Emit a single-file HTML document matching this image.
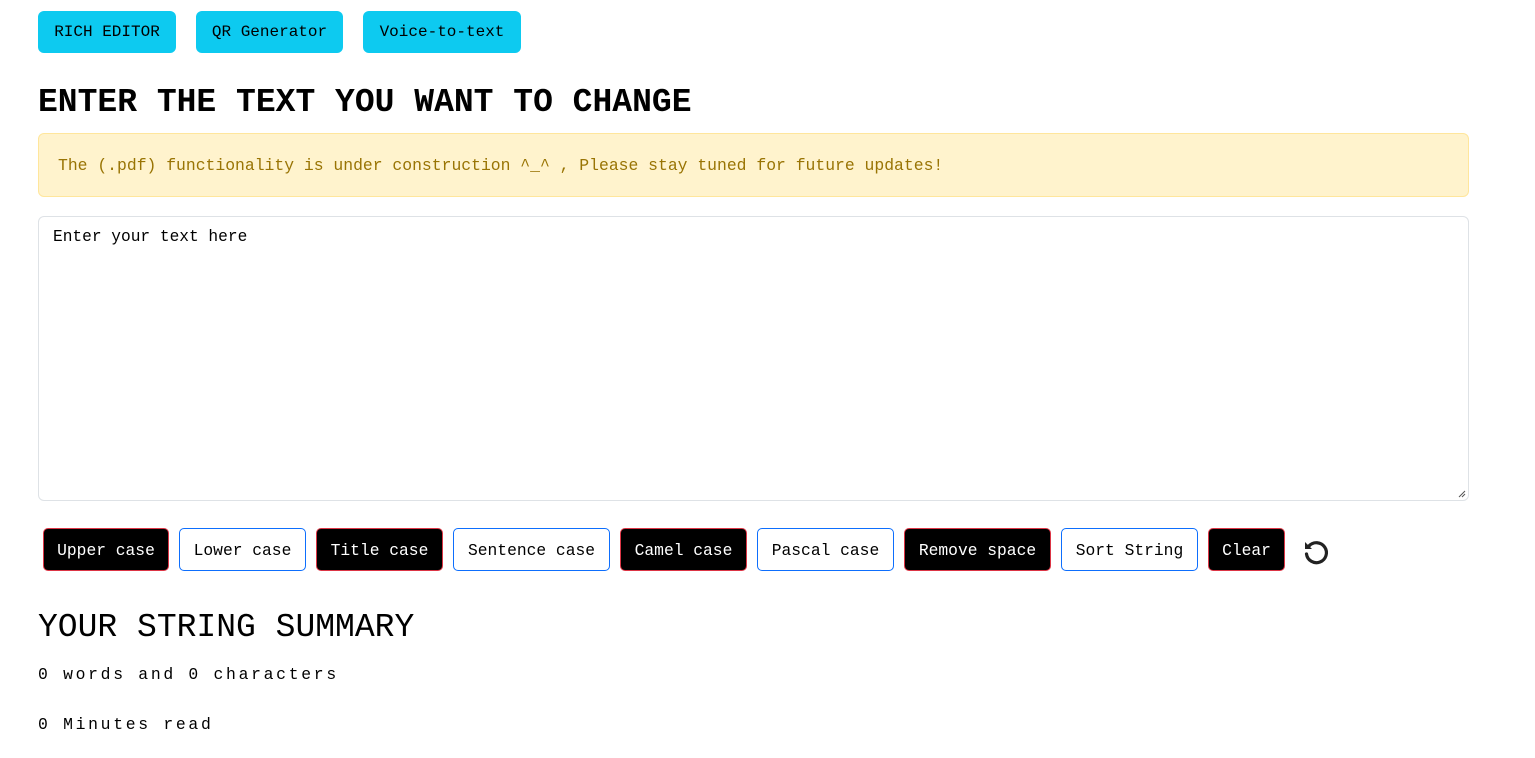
<!DOCTYPE html>
<html><head><meta charset="utf-8"><style>
*{box-sizing:border-box;margin:0;padding:0}
body{width:1535px;height:758px;background:#fff;font-family:"Liberation Mono","DejaVu Sans Mono",monospace;color:#000;position:relative;overflow:hidden}
.a{position:absolute}
.tb{background:#0dcaf0;border-radius:6px;top:11px;height:42px;font-size:16px;display:flex;align-items:center;justify-content:center;color:#000}
h1{position:absolute;left:38px;top:84px;font-size:33px;font-weight:bold;line-height:38px}
.alert{left:38px;top:133px;width:1431px;height:64px;background:#fff3cd;border:1px solid #ffe69c;border-radius:6px;color:#997404;font-size:16.4px;padding-left:19px;display:flex;align-items:center}
.ta{left:38px;top:216px;width:1431px;height:285px;border:1px solid #dee2e6;border-radius:6px;font-size:16.2px;padding:11px 14px}
.b{top:528px;height:43px;border-radius:5px;font-size:16.3px;display:flex;align-items:center;justify-content:center;padding-top:1px}
.d{background:#000;color:#fff;border:1px solid #dc3545}
.o{background:#fff;color:#000;border:1px solid #0d6efd}
h2{position:absolute;left:38px;top:609px;font-size:33px;font-weight:normal;line-height:38px}
.s{left:38px;font-size:16.4px;letter-spacing:2.7px}
</style></head><body>
<div class="a tb" style="left:38px;width:138px">RICH EDITOR</div>
<div class="a tb" style="left:196px;width:147px">QR Generator</div>
<div class="a tb" style="left:363px;width:158px">Voice-to-text</div>
<h1>ENTER THE TEXT YOU WANT TO CHANGE</h1>
<div class="a alert">The (.pdf) functionality is under construction ^_^ , Please stay tuned for future updates!</div>
<div class="a ta">Enter your text here
<svg class="a" style="right:2px;bottom:2px" width="9" height="9" viewBox="0 0 9 9"><path d="M8 2L2 8M8 5L5 8" stroke="#555" stroke-width="1"/></svg></div>
<div class="a b d" style="left:43px;width:126px">Upper case</div>
<div class="a b o" style="left:179px;width:127px">Lower case</div>
<div class="a b d" style="left:316px;width:127px">Title case</div>
<div class="a b o" style="left:453px;width:157px">Sentence case</div>
<div class="a b d" style="left:620px;width:127px">Camel case</div>
<div class="a b o" style="left:757px;width:137px">Pascal case</div>
<div class="a b d" style="left:904px;width:147px">Remove space</div>
<div class="a b o" style="left:1061px;width:137px">Sort String</div>
<div class="a b d" style="left:1208px;width:77px">Clear</div>
<svg class="a" style="left:1301px;top:537px" width="30" height="30" viewBox="0 0 30 30"><path d="M8 9A10 10 0 1 1 5.5 17" fill="none" stroke="#222" stroke-width="3.2" stroke-linecap="round"/><path d="M4 5L4 12L11 12Z" fill="#222"/></svg>
<h2>YOUR STRING SUMMARY</h2>
<div class="a s" style="top:665px">0 words and 0 characters</div>
<div class="a s" style="top:715px">0 Minutes read</div>
</body></html>
